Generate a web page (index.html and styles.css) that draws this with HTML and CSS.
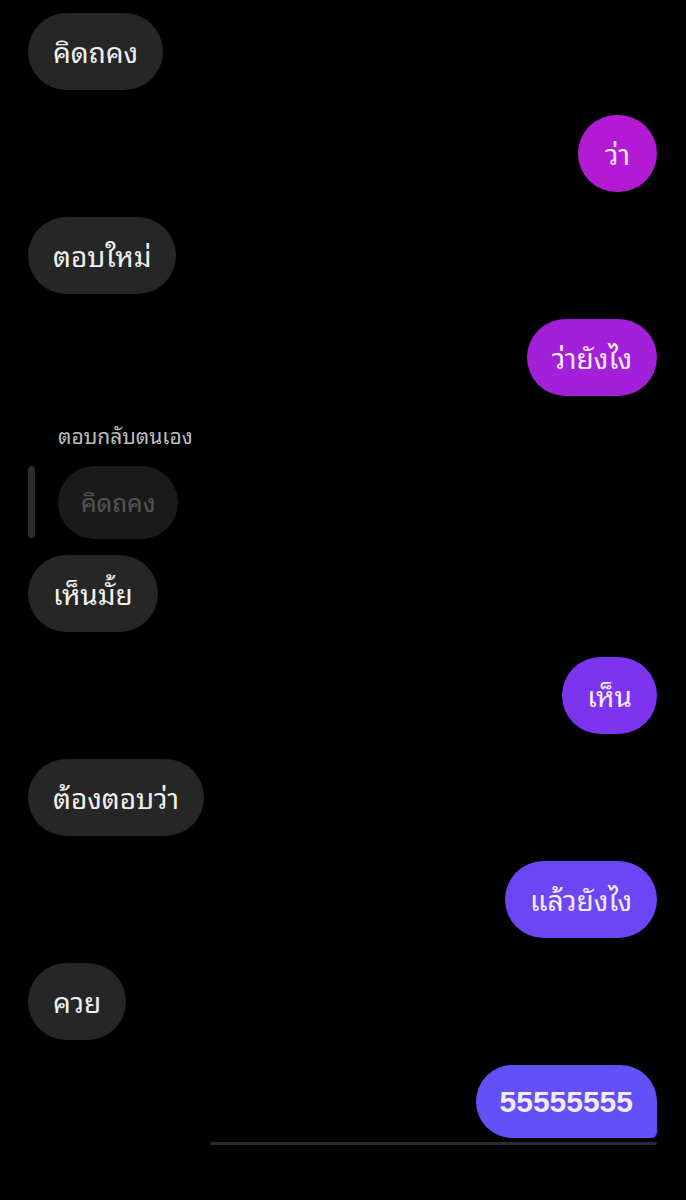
FILE: index.html
```html
<!DOCTYPE html>
<html lang="th">
<head>
    <meta charset="UTF-8">
    <meta name="viewport" content="width=device-width, initial-scale=1.0">
    <title>แชท</title>
    <link rel="stylesheet" href="styles.css">
</head>
<body>
    <div class="chat">
        <div class="row"><div class="bubble them">คิดถคง</div></div>
        <div class="row me"><div class="bubble mine c1">ว่า</div></div>
        <div class="row"><div class="bubble them">ตอบใหม่</div></div>
        <div class="row me"><div class="bubble mine c2">ว่ายังไง</div></div>

        <div class="reply">
            <div class="replyLabel">ตอบกลับตนเอง</div>
            <div class="replyBody">
                <span class="replyBar"></span>
                <div class="bubble quoted">คิดถคง</div>
            </div>
        </div>

        <div class="row tight"><div class="bubble them">เห็นมั้ย</div></div>
        <div class="row me"><div class="bubble mine c3">เห็น</div></div>
        <div class="row"><div class="bubble them">ต้องตอบว่า</div></div>
        <div class="row me"><div class="bubble mine c4">แล้วยังไง</div></div>
        <div class="row"><div class="bubble them">ควย</div></div>
        <div class="row me"><div class="bubble mine c5 last">55555555</div></div>
        <div class="divider"></div>
    </div>
</body>
</html>
```

FILE: styles.css
```css
*{ margin: 0; padding: 0; box-sizing: border-box; }
html, body{ background: #000; }
body{ font-family: "Noto Sans Thai Looped", "Noto Sans", "Noto Sans Thai", "Liberation Sans", sans-serif; color: #f2f2f2; }
.chat{ width: 686px; height: 1200px; padding: 13px 29px 0 28px; display: flex; flex-direction: column; gap: 25px; overflow: hidden; }
.row{ display: flex; }
.row.me{ justify-content: flex-end; }
.row.tight{ margin-top: -9px; }
.bubble{ min-width: 79px; height: 77px; padding: 0 25px 3px; border-radius: 39px; display: flex; align-items: center; justify-content: center; font-size: 28px; white-space: nowrap; }
.them{ background: #262626; color: #f0f0f0; }
.mine{ color: #f6ecff; }
.c1{ background: #b31ad3; }
.c2{ background: #a220d9; }
.c3{ background: #7c34ef; }
.c4{ background: #6c45f4; }
.c5{ background: #6251f8; }
.last{ height: 73px; padding: 0 24px; border-radius: 37px 37px 6px 37px; font-family: "Liberation Sans", sans-serif; font-weight: bold; font-size: 30px; }
.reply{ display: flex; flex-direction: column; gap: 20px; margin-top: 3px; }
.replyLabel{ padding-left: 30px; font-size: 21px; line-height: 22px; color: #bdbdbd; }
.replyBody{ display: flex; gap: 23px; }
.replyBar{ width: 7px; height: 72px; border-radius: 4px; background: #2c2c2c; }
.quoted{ height: 73px; padding: 0 23px 3px; font-size: 24.5px; background: #1a1a1a; color: #555; }
.divider{ margin: -21px 0 0 182px; height: 3px; border-radius: 2px; background: #2a2a2e; }
```
